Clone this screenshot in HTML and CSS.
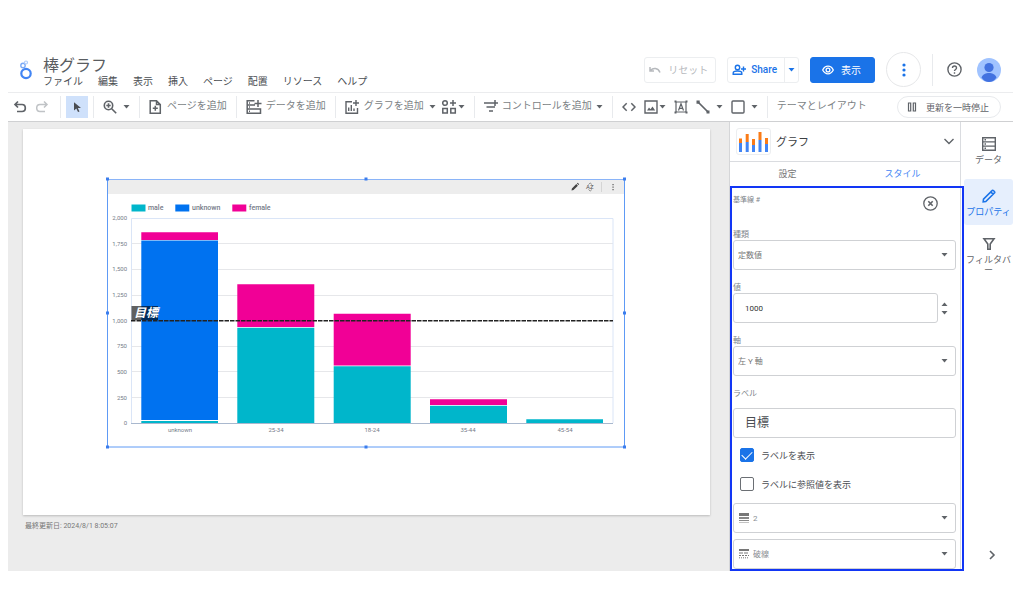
FILE: index.html
```html
<!DOCTYPE html>
<html lang="ja">
<head>
<meta charset="utf-8">
<title>棒グラフ</title>
<link rel="stylesheet" href="styles.css">
</head>
<body>
<svg class="defs" aria-hidden="true">
  <symbol id="caret" viewBox="0 0 7 4"><path d="M.5 0h6L3.500 3.600z" fill="currentColor"/></symbol>
  <symbol id="dots" viewBox="0 0 4 14"><g fill="currentColor"><circle cx="2" cy="2" r="1.600"/><circle cx="2" cy="7" r="1.600"/><circle cx="2" cy="12" r="1.600"/></g></symbol>
</svg>
<div class="app">
  <header class="header">
    <svg class="logo" viewBox="0 0 14 20" fill="none"><circle cx="7" cy="13.500" r="4.700" stroke="#4285f4" stroke-width="2.200"/><circle cx="4" cy="5.500" r="2.200" stroke="#7baaf7" stroke-width="1.400"/><circle cx="7" cy="2.500" r="1.500" stroke="#aecbfa" stroke-width="1.200"/></svg>
    <div class="heading">
      <h1 class="title">棒グラフ</h1>
      <nav class="menu">
        <button>ファイル</button><button>編集</button><button>表示</button><button>挿入</button><button>ページ</button><button>配置</button><button>リソース</button><button>ヘルプ</button>
      </nav>
    </div>
    <div class="actions">
      <button class="btn reset" disabled><svg class="i12" viewBox="0 0 12 12" fill="none" stroke="currentColor" stroke-width="1.500"><path d="M1 3v4h4M1.500 6.500C4 3.500 9 3.500 11 8.500"/></svg>リセット</button>
      <div class="btn share">
        <button class="share-main"><svg class="i14" viewBox="0 0 14 14" fill="none" stroke="currentColor" stroke-width="1.400"><circle cx="5.500" cy="4.500" r="2.200"/><path d="M1.200 11.300V10c0-1.300 2.300-2 4.300-2s4.300.7 4.300 2v1.300zM11.500 3.500v5M9 6h5"/></svg>Share</button>
        <button class="share-more" aria-label="共有オプション"><svg class="caret"><use href="#caret"/></svg></button>
      </div>
      <button class="btn view"><svg class="i12" viewBox="0 0 12 12" fill="none" stroke="currentColor" stroke-width="1.300"><path d="M.7 6C2 3.400 3.900 2.200 6 2.200S10 3.400 11.300 6C10 8.600 8.100 9.800 6 9.800S2 8.600.7 6z"/><circle cx="6" cy="6" r="1.900"/></svg>表示</button>
      <button class="round" aria-label="その他"><svg class="dots"><use href="#dots"/></svg></button>
      <span class="rule"></span>
      <button class="help" aria-label="ヘルプ"><svg viewBox="0 0 15 15" fill="none" stroke="currentColor" stroke-width="1.400"><circle cx="7.500" cy="7.500" r="6.600"/><path d="M5.500 6c0-2.600 4-2.600 4 0 0 1.400-2 1.500-2 3.100M7.500 10.300v1.400"/></svg></button>
      <button class="avatar" aria-label="アカウント"><svg viewBox="0 0 24 24"><circle cx="12" cy="12" r="12" fill="#a0c3ff"/><circle cx="12" cy="9.500" r="4.600" fill="#4272e0"/><path d="M4.500 19.500c1.500-3.500 4.500-4.500 7.500-4.500s6 1 7.500 4.500C17.500 22.500 15 24 12 24s-5.500-1.500-7.500-4.500z" fill="#4272e0"/></svg></button>
    </div>
  </header>

  <div class="toolbar">
    <div class="group history">
      <button class="tool" aria-label="元に戻す"><svg class="i14" viewBox="0 0 14 14" fill="none" stroke="currentColor" stroke-width="1.700"><path d="M5 1.500 2 4.500l3 3M2.500 4.500H9c4.400 0 4.400 7 0 7H4"/></svg></button>
      <button class="tool faded" aria-label="やり直す"><svg class="i14" viewBox="0 0 14 14" fill="none" stroke="currentColor" stroke-width="1.500"><path d="m9 1.500 3 3-3 3M11.500 4.500H5c-4.400 0-4.400 7 0 7h5"/></svg></button>
    </div>
    <div class="group select-group">
      <button class="pointer" aria-label="選択"><svg class="i12" viewBox="0 0 12 12"><path d="M3 1.200 10 7H6.800l1.700 3.400-1.500.7-1.700-3.500L3 9.500z" fill="#4a4d52"/></svg></button>
    </div>
    <div class="group">
      <button class="tool wide" aria-label="ズーム"><svg class="i14" viewBox="0 0 14 14" fill="none" stroke="currentColor" stroke-width="1.600"><circle cx="5.500" cy="5.500" r="4.200"/><path d="m8.700 8.700 4.500 4.500M3.300 5.500h4.400M5.500 3.300v4.400"/></svg><svg class="caret"><use href="#caret"/></svg></button>
    </div>
    <div class="group">
      <button class="tool"><svg class="i14" viewBox="0 0 14 14" fill="none" stroke="currentColor" stroke-width="1.500"><path d="M1.200.8h6.300l3.800 3.800v8.700H1.200zM7.500.8v3.800h3.800M6.300 5.800v5M3.800 8.300h5"/></svg><span>ページを追加</span></button>
    </div>
    <div class="group">
      <button class="tool"><svg class="i16" viewBox="0 0 16 16" fill="none" stroke="currentColor" stroke-width="1.500"><path d="M8.500 1.700H1.200v12.600h13.300V10H1.200M1.200 6H9M12 1v7M8.500 4.500h7M3 4h1M3 8h1M3 12.200h1"/></svg><span>データを追加</span></button>
    </div>
    <div class="group charts">
      <button class="tool"><svg class="i14" viewBox="0 0 14 14" fill="none" stroke="currentColor" stroke-width="1.400"><path d="M7 1.700H1v11.600h11.500V8M3.700 11V7.500M6.300 11V5M9 11V8.500M11 0v6M8 3h6"/></svg><span>グラフを追加</span><svg class="caret"><use href="#caret"/></svg></button>
      <button class="tool tight" aria-label="コミュニティ ビジュアリゼーション"><svg class="i16" viewBox="0 0 16 16" fill="none" stroke="currentColor" stroke-width="1.500"><circle cx="4" cy="4" r="2.300"/><path d="M12 1v6M9 4h6M1.800 9.500h4.500V14H1.800zM9.800 9.500h4.500V14H9.800z"/></svg><svg class="caret"><use href="#caret"/></svg></button>
    </div>
    <div class="group">
      <button class="tool"><svg class="i14" viewBox="0 0 14 14" fill="none" stroke="currentColor" stroke-width="1.500"><path d="M0 3h8M2.500 7H11M5 11h4M11 0v6M8 3h6"/></svg><span>コントロールを追加</span><svg class="caret"><use href="#caret"/></svg></button>
    </div>
    <div class="group insert">
      <button class="tool" aria-label="埋め込み"><svg class="i14" viewBox="0 0 14 14" fill="none" stroke="currentColor" stroke-width="1.500"><path d="M4.700 3.300 1 7l3.700 3.700M9.300 3.300 13 7l-3.700 3.700"/></svg></button>
      <button class="tool tight" aria-label="画像"><svg class="i14" viewBox="0 0 14 14" fill="none" stroke="currentColor" stroke-width="1.400"><path d="M1 1h12v12H1z"/><path d="m3 10.500 2-3 1.500 1.800 2-2.800 2.700 4z" fill="currentColor" stroke="none"/></svg><svg class="caret"><use href="#caret"/></svg></button>
      <button class="tool" aria-label="テキスト"><svg class="i14" viewBox="0 0 14 14" fill="none" stroke="currentColor" stroke-width="1.200"><path d="M2 2h10v10H2zM4.500 10.500 7 3.800l2.500 6.700M5.400 8.300h3.200"/><path d="M.5.500h2v2h-2zM11.500.5h2v2h-2zM.5 11.500h2v2h-2zM11.500 11.500h2v2h-2z" fill="currentColor" stroke="none"/></svg></button>
      <button class="tool wide" aria-label="線"><svg class="i14" viewBox="0 0 14 14"><path d="m2 2 10 10" stroke="currentColor" stroke-width="1.700"/><path d="M.5.500h3.200v3.200H.5zM10.500 10.500h3v3h-3z" fill="currentColor"/></svg><svg class="caret"><use href="#caret"/></svg></button>
      <button class="tool wide" aria-label="図形"><svg class="i14" viewBox="0 0 14 14" fill="none" stroke="currentColor" stroke-width="1.400"><rect x="1" y="1" width="12" height="12" rx="1"/></svg><svg class="caret"><use href="#caret"/></svg></button>
    </div>
    <div class="group last"><button class="tool"><span>テーマとレイアウト</span></button></div>
    <button class="pause"><svg class="i10" viewBox="0 0 10 10" fill="none" stroke="currentColor" stroke-width="1.200"><path d="M1.500 1h2.200v8H1.500zM6.300 1h2.200v8H6.300z"/></svg>更新を一時停止</button>
  </div>

  <div class="workspace">
    <main class="stage">
      <div class="sheet">
        <svg class="chart" viewBox="105 177 522 272" role="img" aria-label="年齢別棒グラフ">
          <rect x="108" y="180" width="516" height="14" fill="#ededed"/>
          <path d="M107.500 447V179M624.500 179v268M107 447h518" fill="none" stroke="#5e9af5"/>
          <path d="M107 179.500h518" stroke="#8ab4f8"/>
          <g fill="#3b7ded"><path d="M106 177.500h3v3h-3zM364.500 177.500h3v3h-3zM623 177.500h3v3h-3zM106 311.500h3v3h-3zM623 311.500h3v3h-3zM106 445.500h3v3h-3zM364.500 445.500h3v3h-3zM623 445.500h3v3h-3z"/></g>
          <path d="m571.500 190.500.4-2 4.400-4.400 1.600 1.600-4.400 4.400zM576.900 183.500l.8-.7 1.500 1.500-.7.800z" fill="#444"/>
          <text class="az" x="586" y="189">AZ</text>
          <path d="m588.500 184.500 1.700-1.500 1.700 1.500M588.500 189.500l1.700 1.500 1.700-1.500" fill="none" stroke="#666" stroke-width=".7"/>
          <path d="M601.500 182v10" stroke="#d5d5d5"/>
          <path d="M612.400 184h1.300v1.300h-1.300zM612.400 186.500h1.300v1.300h-1.300zM612.400 189h1.300v1.300h-1.300z" fill="#666"/>
          <path d="M131.500 204.500h14v7h-14z" fill="#00b6cb"/><path d="M175.300 204.500h14v7h-14z" fill="#0072f0"/><path d="M232.300 204.500h14v7h-14z" fill="#f10096"/>
          <g class="legend"><text x="148" y="210">male</text><text x="192" y="210">unknown</text><text x="249" y="210">female</text></g>
          <path d="M132 243.500h481M132 269.500h481M132 295.500h481M132 346.500h481M132 371.500h481M132 397.500h481" stroke="#e6e7ea"/>
          <path d="M131.500 423V218.500h481.500V423" fill="none" stroke="#dae5f7"/>
          <g fill="#f10096"><path d="M141.300 232.300H218V240h-76.700zM237.300 284.300h77V327h-77zM333.700 313.700h77v51.800h-77zM430 399.300h77v5.700h-77z"/></g>
          <path d="M141.300 240.600H218V420h-76.700z" fill="#0072f0"/>
          <path d="M141.300 421H218v2.300h-76.700zM237.300 327.700h77v95.600h-77zM333.700 366.200h77v57.100h-77zM430 405.700h77v17.600h-77zM526.300 419.300H603v4h-76.700z" fill="#00b6cb"/>
          <path d="M131 423.500h482" stroke="#a9b8ce"/>
          <path d="M131 320.700h482" stroke="#222" stroke-width="1.400" stroke-dasharray="4.500 1"/>
          <path d="M131.500 306H158v14h-26.500z" fill="#000" fill-opacity=".62"/>
          <text class="goal" x="134" y="317">目標</text>
          <g class="axis end"><text x="127" y="220">2,000</text><text x="127" y="246">1,750</text><text x="127" y="271">1,500</text><text x="127" y="297">1,250</text><text x="127" y="323">1,000</text><text x="127" y="348">750</text><text x="127" y="374">500</text><text x="127" y="400">250</text><text x="127" y="425">0</text></g>
          <g class="axis mid"><text x="180" y="432">unknown</text><text x="276" y="432">25-34</text><text x="372" y="432">18-24</text><text x="468" y="432">35-44</text><text x="565" y="432">45-54</text></g>
        </svg>
      </div>
      <p class="updated">最終更新日: 2024/8/1 8:05:07</p>
    </main>

    <aside class="panel">
      <div class="panel-head">
        <span class="thumb"><svg viewBox="0 0 30 22"><path d="M0 11h3v10H0zM6.700 11h3v10h-3zM13 14h3v7h-3zM19.500 9h3v12h-3zM26 12h3v9h-3z" fill="#4285f4"/><path d="M0 7.500h3V12H0zM6.700 3h3v8h-3zM13 8h3v6h-3zM19.500 1h3v8h-3zM26 7h3v6h-3z" fill="#fa7b17"/></svg></span>
        <h2 class="panel-title">グラフ</h2>
        <button class="fold" aria-label="グラフの種類"><svg class="i12" viewBox="0 0 12 12" fill="none" stroke="currentColor" stroke-width="1.400"><path d="m1.500 3 4.500 4.500L10.500 3"/></svg></button>
      </div>
      <div class="tabs"><button class="tab">設定</button><button class="tab current">スタイル</button></div>
      <form class="frame">
        <div class="fields">
          <div class="line-head">基準線 #<button type="button" class="remove" aria-label="削除"><svg viewBox="0 0 15 15" fill="none" stroke="currentColor" stroke-width="1.300"><circle cx="7.500" cy="7.500" r="6.700"/><path d="m5.300 5.300 4.400 4.400m0-4.400L5.300 9.700" stroke-width="1.600"/></svg></button></div>
          <label class="label" for="kind">種類</label>
          <div class="box"><select id="kind"><option>定数値</option></select><svg class="caret"><use href="#caret"/></svg></div>
          <label class="label spaced" for="value">値</label>
          <div class="number"><div class="box"><input id="value" class="value" type="number" value="1000"></div>
            <div class="steps"><button type="button" aria-label="増やす"><svg class="caret up"><use href="#caret"/></svg></button><button type="button" aria-label="減らす"><svg class="caret"><use href="#caret"/></svg></button></div></div>
          <label class="label spaced" for="axis">軸</label>
          <div class="box"><select id="axis"><option>左 Y 軸</option></select><svg class="caret"><use href="#caret"/></svg></div>
          <label class="label spaced" for="name">ラベル</label>
          <div class="box name-box"><input id="name" class="name" type="text" value="目標"></div>
          <label class="check"><input type="checkbox" checked>ラベルを表示</label>
          <label class="check"><input type="checkbox">ラベルに参照値を表示</label>
          <div class="box pale"><svg class="weight" viewBox="0 0 10 10"><path d="M0 0h10v3H0z" fill="#777"/><path d="M0 4h10v2H0zM0 7h10v1H0zM0 9h10v.6H0z" fill="#888"/></svg><select aria-label="線の太さ"><option>2</option></select><svg class="caret"><use href="#caret"/></svg></div>
          <div class="box pale second"><svg class="weight" viewBox="0 0 10 10" fill="none" stroke="#777"><path d="M0 1h10" stroke-width="2"/><path d="M0 4h10" stroke-dasharray="4 1"/><path d="M0 6.500h10" stroke-dasharray="2 1"/><path d="M0 8.800h10" stroke-dasharray="1 1"/></svg><select aria-label="線の種類"><option>破線</option></select><svg class="caret"><use href="#caret"/></svg></div>
        </div>
      </form>
    </aside>

    <nav class="rail">
      <button class="rail-item"><svg class="i14" viewBox="0 0 14 14" fill="none" stroke="currentColor" stroke-width="1.400"><path d="M.7.7h12.600v12.600H.7zM.7 4.900h12.600M.7 9.100h12.600M2.500 2.800H4M2.500 7H4M2.500 11.200H4"/></svg>データ</button>
      <button class="rail-item on"><svg class="i14" viewBox="0 0 14 14" fill="none" stroke="currentColor" stroke-width="1.600"><path d="m1.200 12.800.3-2.600 7.300-7.300 2.300 2.300-7.300 7.300zM9.200 2.500l1.200-1.200c.5-.5 2.800 1.700 2.300 2.300l-1.200 1.200"/></svg>プロパティ</button>
      <button class="rail-item"><svg class="i14" viewBox="0 0 14 14" fill="none" stroke="currentColor" stroke-width="1.600"><path d="M2 1.800h10L8.200 7v5.300H5.800V7z"/></svg>フィルタバー</button>
      <button class="collapse" aria-label="閉じる"><svg class="i12" viewBox="0 0 12 12" fill="none" stroke="currentColor" stroke-width="1.600"><path d="m4 2 4 4-4 4"/></svg></button>
    </nav>
  </div>
</div>
</body>
</html>
```
FILE: styles.css
```css
* { box-sizing: border-box; }
body {
  margin: 0;
  background: #fff;
  color: #5f6368;
  font-family: Roboto, "Noto Sans CJK JP", sans-serif;
  font-size: 10px;
}
button, input, select {
  font: inherit;
  color: inherit;
  background: none;
  border: 0;
  padding: 0;
  margin: 0;
  min-width: 0;
}
button { white-space: nowrap; }
h1, h2, p { margin: 0; font-weight: 400; }
svg { display: block; flex: none; }
.defs { display: none; }
.i10 { width: 10px; height: 10px; }
.i12 { width: 12px; height: 12px; }
.i14 { width: 14px; height: 14px; }
.i16 { width: 16px; height: 16px; }
.caret { width: 7px; height: 4px; }
.caret.up { transform: rotate(180deg); }
.dots { width: 4px; height: 14px; }

.app { margin: 47px 11px 0 8px; }

.header {
  display: flex;
  align-items: center;
  min-height: 45px;
  padding: 0 12px 0 11px;
}
.logo { width: 14px; height: 20px; }
.heading { margin-left: 10px; padding-top: 6px; }
.title { font-size: 16px; line-height: 18px; color: #5a5d61; }
.menu { display: flex; gap: 15px; line-height: 14px; color: #4a4d52; }
.actions { display: flex; align-items: center; gap: 11px; margin-left: auto; }
.btn {
  display: flex;
  align-items: center;
  height: 26px;
  border: 1px solid #eceef0;
  border-radius: 3px;
}
.reset { gap: 7px; padding: 0 7px 0 4px; color: #b6b9bd; }
.share { color: #1a73e8; font-weight: 500; }
.share-main { display: flex; align-items: center; gap: 5px; padding: 0 7px 0 4px; }
.share-more {
  display: flex;
  align-items: center;
  justify-content: center;
  align-self: stretch;
  width: 14px;
  border-left: 1px solid #eceef0;
}
.view {
  gap: 7px;
  padding: 0 13px 0 11px;
  color: #fff;
  background: #1a73e8;
  border-color: #1a73e8;
}
.round {
  display: grid;
  place-items: center;
  width: 35px;
  height: 35px;
  border: 1px solid #e6e7e9;
  border-radius: 50%;
  color: #1a73e8;
}
.rule { width: 1px; height: 32px; background: #e8eaed; }
.help { width: 15px; margin: 0 4px 0 3px; }
.avatar { width: 24px; }

.toolbar {
  display: flex;
  align-items: center;
  min-height: 30px;
  border-top: 1px solid #ebecee;
  border-bottom: 1px solid #cfd0d2;
}
.group {
  display: flex;
  align-items: center;
  gap: 7px;
  height: 22px;
  padding: 0 9px;
  border-right: 1px solid #e8eaed;
}
.history { padding: 0 11px 0 5px; gap: 8px; }
.select-group { padding: 0 5px; }
.charts { gap: 5px; }
.charts .tool:first-child { gap: 5px; }
.insert { gap: 8px; }
.last { border: 0; }
.tool { display: flex; align-items: center; gap: 4px; color: #7b7f84; }
.tool span { line-height: 14px; padding-bottom: 2px; }
.tool svg { color: #5f6368; }
.tool.wide { gap: 6px; }
.tool.tight { gap: 1px; }
.tool.faded svg { color: #c0c3c6; }
.pointer {
  display: grid;
  place-items: center;
  width: 22px;
  height: 22px;
  background: #cfe1fb;
}
.pause {
  display: flex;
  align-items: center;
  gap: 9px;
  height: 22px;
  margin: 0 12px 0 auto;
  padding: 0 11px 0 9px;
  border: 1px solid #e8eaed;
  border-radius: 11px;
  font-size: 9px;
}

.workspace { display: flex; min-height: 449px; }
.stage {
  flex: 1;
  min-width: 0;
  padding: 7px 19px 0 15px;
  background: #ececec;
}
.sheet {
  min-height: 386px;
  padding: 48px 83px 0 82px;
  background: #fff;
  box-shadow: 0 1px 2px #bbb;
}
.chart { width: 100%; height: auto; }
.chart text { fill: #757b88; }
.chart .legend { font-size: 7px; font-weight: 500; }
.chart .axis { font-size: 6px; }
.chart .end { text-anchor: end; }
.chart .mid { text-anchor: middle; }
.chart .az { font-size: 6px; fill: #555; }
.chart .goal { font-size: 12px; font-weight: 700; font-style: italic; fill: #fff; }
.updated { margin-top: 6px; padding-left: 2px; font-size: 7px; line-height: 10px; color: #777; }

.panel {
  display: flex;
  flex-direction: column;
  width: 235px;
  border-left: 1px solid #d5d6d8;
}
.panel-head {
  display: flex;
  align-items: center;
  height: 40px;
  margin-right: 3px;
  padding: 0 5px 0 6px;
  border-right: 1px solid #dadce0;
  border-bottom: 1px solid #dadce0;
}
.thumb {
  display: grid;
  place-items: center;
  width: 35px;
  height: 27px;
  border: 1px solid #eceef0;
  border-radius: 3px;
}
.thumb svg { width: 30px; height: 22px; }
.panel-title { margin-left: 5px; padding-bottom: 2px; font-size: 11px; color: #3c4043; }
.fold { margin-left: auto; }
.tabs {
  display: grid;
  grid-template-columns: 1fr 1fr;
  height: 24px;
  margin-right: 3px;
  padding-bottom: 2px;
  border-right: 1px solid #dadce0;
}
.tab { font-size: 9px; color: #777; }
.tab.current { color: #4285f4; }
.frame { flex: 1; border: 2px solid #1236f5; padding-right: 1px; }
.fields {
  height: 100%;
  padding: 0 4px 0 1px;
  border-right: 1px solid #dadce0;
  font-size: 8px;
  color: #80868b;
}
.line-head {
  display: flex;
  justify-content: space-between;
  align-items: flex-start;
  height: 41px;
  padding: 8px 18px 0 0;
  font-size: 7px;
  line-height: 8px;
}
.remove { width: 15px; color: #5f6368; }
.label { display: block; line-height: 11px; }
.label.spaced { margin-top: 12px; }
.box {
  display: flex;
  align-items: center;
  height: 30px;
  padding: 0 7px 0 4px;
  border: 1px solid #cfd1d4;
  border-radius: 3px;
}
.box .caret { color: #5f6368; }
.box select { flex: 1; appearance: none; color: #777; }
.box input { width: 100%; outline: 0; }
.number { display: flex; gap: 3px; padding-right: 8px; }
.number .box { flex: 1; padding-left: 11px; }
.value { appearance: textfield; color: #333; }
.value::-webkit-inner-spin-button { appearance: none; }
.steps { display: flex; flex-direction: column; justify-content: center; gap: 5px; color: #5f6368; }
.name-box { margin: 9px 0 7px; padding-left: 11px; }
.name { padding-bottom: 3px; font-size: 12px; color: #4a4d52; }
.check {
  display: flex;
  align-items: center;
  gap: 7px;
  height: 20px;
  margin-bottom: 9px;
  padding-left: 7px;
  font-size: 9px;
  color: #4a4d52;
}
.check input {
  appearance: none;
  display: grid;
  place-items: center;
  width: 14px;
  height: 14px;
  border: 1px solid #6b6f74;
  border-radius: 2px;
}
.check input:checked { background: #1a73e8; border-color: #1a73e8; }
.check input:checked::before {
  content: "";
  width: 9px;
  height: 5px;
  margin-bottom: 3px;
  border: solid #fff;
  border-width: 0 0 1px 1px;
  transform: rotate(-45deg);
}
.pale { gap: 4px; padding-left: 5px; }
.pale select { color: #8b8f94; }
.weight { width: 10px; height: 10px; }
.second { margin-top: 6px; }

.rail {
  display: flex;
  flex-direction: column;
  gap: 2px;
  width: 49px;
  padding-top: 5px;
}
.rail-item {
  display: flex;
  flex-direction: column;
  align-items: center;
  gap: 4px;
  min-height: 46px;
  padding: 10px 1px 8px;
  font-size: 9px;
  line-height: 10px;
  white-space: normal;
  word-break: break-all;
  line-break: anywhere;
}
.rail-item.on { margin-top: 4px; background: #e6effd; border-radius: 3px; color: #1a73e8; }
.collapse { margin: auto 15px 10px auto; }
```
